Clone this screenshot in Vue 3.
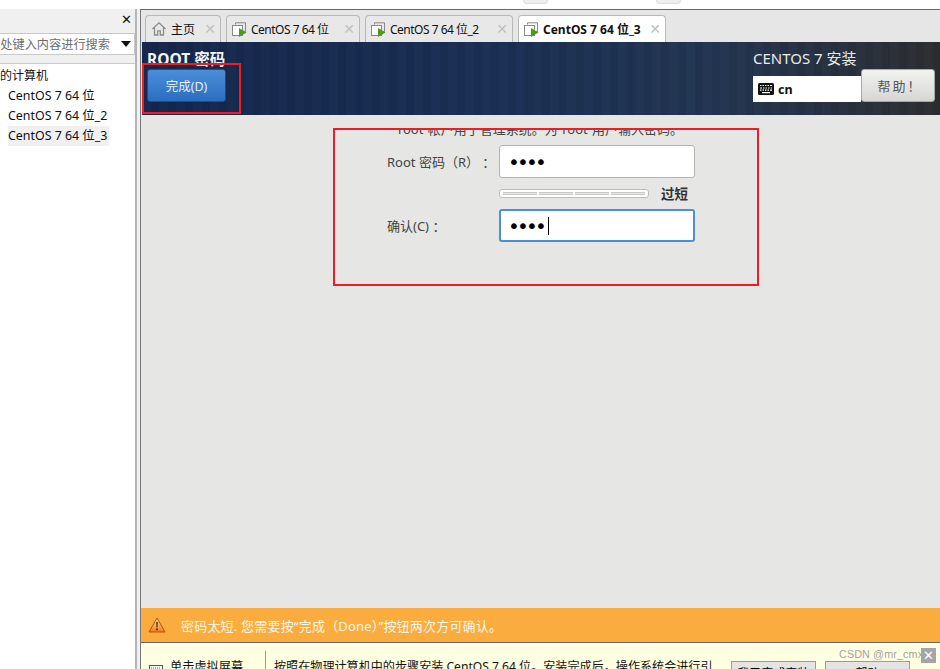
<template>
  <div class="page">
    <div class="top-strip">
      <span class="bump first"></span>
      <span class="bump second"></span>
    </div>

    <div class="workspace">
      <aside class="library">
        <div class="library-head"><span class="library-close">✕</span></div>
        <div class="search">
          <span class="search-text">在此处键入内容进行搜索</span>
          <span class="search-arrow"></span>
        </div>
        <div class="tree">
          <div class="tree-root">我的计算机</div>
          <div
            v-for="vm in vms"
            :key="vm.name"
            class="tree-row"
          >
            <svg class="tree-icon" width="8" height="14" viewBox="0 0 8 14">
              <rect x="-6" y="1" width="8" height="8" fill="none" stroke="#777" />
              <path d="M0 5l3 3.5-3 3.5z" fill="#4f9a1a" />
            </svg>
            <span class="tree-name" :class="{ selected: vm.selected }">{{ vm.name }}</span>
          </div>
        </div>
      </aside>

      <section class="vm-panel">
        <div class="tabs">
          <div class="tab home">
            <svg width="16" height="16" viewBox="0 0 16 16">
              <path d="M1.5 8L8 1.8 14.5 8M3.5 6.8V14h3.2V9.8h2.6V14h3.2V6.8" fill="none" stroke="#8b8b8b" stroke-width="1.3" />
            </svg>
            <span class="tab-label">主页</span>
            <span class="tab-close">✕</span>
          </div>
          <div
            v-for="tab in tabs"
            :key="tab.name"
            class="tab"
            :class="{ active: tab.active }"
          >
            <svg width="15" height="15" viewBox="0 0 15 15">
              <path d="M3.5 2.5V.8h10v9h-2" fill="none" stroke="#888" />
              <rect x="0.5" y="3.5" width="10" height="10" fill="#fff" stroke="#888" />
              <path d="M7 6l7.5 4.5L7 15z" fill="#4f9a1a" />
            </svg>
            <span class="tab-label">{{ tab.name }}</span>
            <span class="tab-close">✕</span>
          </div>
        </div>

        <header class="install-header">
          <div class="header-left">
            <div class="spoke-title">ROOT 密码</div>
            <button class="done-btn">完成(D)</button>
          </div>
          <div class="header-right">
            <div class="product">CENTOS 7 安装</div>
            <div class="header-controls">
              <div class="layout-entry">
                <svg width="16" height="12" viewBox="0 0 16 12">
                  <rect width="16" height="12" rx="1.5" fill="#111" />
                  <path d="M2 2.5h1.5M4.5 2.5H6M7 2.5h1.500M9.500 2.500H11M12 2.500h2M2 5h2M5 5h1.500M7.500 5H9M10 5h1.500M12.500 5H14M2 7.200h1.500M4.500 7.200H6M7 7.200h1.500M9.500 7.200H11M12 7.200h2M4 9.700h8" stroke="#fff" stroke-width="1.200" fill="none" />
                </svg>
                <span>cn</span>
              </div>
              <button class="help-btn">帮助！</button>
            </div>
          </div>
        </header>

        <main class="spoke">
          <div class="description"><span>root 帐户用于管理系统。为 root 用户输入密码。</span></div>
          <div class="form">
            <label class="field-label">Root 密码（R） ：</label>
            <div class="field"><span class="dots">••••</span></div>

            <div class="meter-row">
              <div class="meter">
                <span v-for="n in 4" :key="n" class="meter-seg"></span>
              </div>
              <span class="meter-text">过短</span>
            </div>

            <label class="field-label confirm">确认(C) ：</label>
            <div class="field focused"><span class="dots">••••</span><span class="caret"></span></div>
          </div>
        </main>

        <div class="warning">
          <svg width="18" height="16" viewBox="0 0 18 16">
            <defs>
              <linearGradient id="warn" x1="0" y1="0" x2="0" y2="1">
                <stop offset="0" stop-color="#fbe3b0" />
                <stop offset="1" stop-color="#ee7d16" />
              </linearGradient>
            </defs>
            <path d="M9 1L17 15H1z" fill="url(#warn)" stroke="#b8500c" stroke-linejoin="round" />
            <path d="M8.200 5h1.600l-.3 5.500h-1zM8.100 11.500h1.800v1.800H8.100z" fill="#5a2a08" />
          </svg>
          <span>密码太短. 您需要按“完成（Done）”按钮两次方可确认。</span>
        </div>

        <div class="hint">
          <div class="hint-left">
            <svg class="hint-icon" width="14" height="11" viewBox="0 0 14 11">
              <rect x="0.500" y="0.500" width="13" height="10" fill="#fff" stroke="#555" />
              <path d="M2 3h10M2 5.500h10" stroke="#555" stroke-dasharray="1 1" />
            </svg>
            <span>单击虚拟屏幕</span>
          </div>
          <div class="hint-text">按照在物理计算机中的步骤安装 CentOS 7 64 位。安装完成后，操作系统会进行引</div>
          <button class="hint-btn finish">我已完成安装</button>
          <button class="hint-btn">帮助</button>
        </div>
      </section>
    </div>

    <div class="mark mark-done"></div>
    <div class="mark mark-form"></div>
    <div class="watermark">CSDN @mr_cmx</div>
    <div class="ad-close">✕</div>
  </div>
</template>

<script setup>
const vms = [
  { name: 'CentOS 7 64 位' },
  { name: 'CentOS 7 64 位_2' },
  { name: 'CentOS 7 64 位_3', selected: true }
]

const tabs = [
  { name: 'CentOS 7 64 位' },
  { name: 'CentOS 7 64 位_2' },
  { name: 'CentOS 7 64 位_3', active: true }
]
</script>

<style>
html,
body {
  margin: 0;
  background: #fff;
}
</style>

<style scoped>
.page {
  position: relative;
  width: 940px;
  height: 669px;
  overflow: hidden;
  display: flex;
  flex-direction: column;
  background: #fff;
  font-family: "Noto Sans", "Noto Sans CJK SC", sans-serif;
  font-size: 12px;
  color: #111;
}

.top-strip {
  position: relative;
  height: 9px;
  flex-shrink: 0;
}

.bump {
  position: absolute;
  top: 0;
  width: 25px;
  height: 4px;
  background: #eee;
  border: 1px solid #ddd;
  border-top: none;
  border-radius: 0 0 4px 4px;
  box-sizing: border-box;
}

.bump.first { left: 523px; }
.bump.second { left: 656px; }

.workspace {
  flex: 1;
  min-height: 0;
  display: flex;
}

.library {
  width: 135px;
  flex-shrink: 0;
  display: flex;
  flex-direction: column;
  background: #f0f0f0;
  overflow: hidden;
}

.library-head {
  height: 24px;
  flex-shrink: 0;
  display: flex;
  justify-content: flex-end;
  padding: 3px 3px 0 0;
  box-sizing: border-box;
}

.library-close {
  font-family: "DejaVu Sans", sans-serif;
  font-size: 13px;
  font-weight: 700;
  line-height: 16px;
  color: #111;
}

.search {
  height: 22px;
  flex-shrink: 0;
  display: flex;
  align-items: center;
  justify-content: flex-end;
  background: #fff;
  border: 1px solid #c8c8c8;
  border-left: none;
  box-sizing: border-box;
  overflow: hidden;
}

.search-text {
  white-space: nowrap;
  color: #6d6d6d;
  font-size: 12.200px;
  margin-right: 24px;
  flex-shrink: 0;
}

.search-arrow {
  width: 0;
  height: 0;
  margin-right: 3px;
  border-left: 5px solid transparent;
  border-right: 5px solid transparent;
  border-top: 6px solid #111;
  position: absolute;
}

.tree {
  flex: 1;
  margin-top: 8px;
  padding-top: 2px;
  background: #fff;
  border-top: 1px solid #c8c8c8;
}

.tree-root {
  height: 20px;
  line-height: 20px;
  margin-left: -12px;
  white-space: nowrap;
  font-size: 12px;
}

.tree-row {
  height: 20px;
  display: flex;
  align-items: center;
}

.tree-icon {
  flex-shrink: 0;
  margin-right: 3px;
  margin-left: -3px;
}

.tree-name {
  padding: 0 2px 0 0;
  line-height: 20px;
  font-size: 12.400px;
  white-space: nowrap;
}

.tree-name.selected {
  background: #f0f0f0;
}

.vm-panel {
  flex: 1;
  min-width: 0;
  margin-left: 5px;
  display: flex;
  flex-direction: column;
  background: #e6e6e6;
  border-top: 1px solid #666;
  border-left: 1px solid #777;
  box-shadow: -3px 0 0 #f0f0f0, -5px 0 0 #b4b4b4;
}

.tabs {
  height: 32px;
  flex-shrink: 0;
  display: flex;
  align-items: flex-end;
  gap: 5px;
  padding-left: 4px;
}

.tab {
  width: 148px;
  height: 27px;
  box-sizing: border-box;
  display: flex;
  align-items: center;
  gap: 4px;
  padding: 0 4px 0 5px;
  background: #e8e8e8;
  border: 1px solid #b9b9b9;
  border-bottom: none;
  border-radius: 4px 4px 0 0;
}

.tab:nth-child(2) {
  width: 134px;
}

.tab.home {
  width: 76px;
}

.tab.active {
  background: #fff;
  font-weight: 700;
}

.tab-label {
  flex: 1;
  white-space: nowrap;
  font-size: 12px;
  letter-spacing: -0.5px;
}

.tab.active .tab-label {
  letter-spacing: 0;
}

.tab.home .tab-label {
  letter-spacing: 0;
}

.tab-close {
  font-family: "DejaVu Sans", sans-serif;
  font-size: 14px;
  font-weight: 700;
  color: #c0c0c0;
}

.install-header {
  height: 73px;
  flex-shrink: 0;
  margin-left: 1px;
  display: flex;
  justify-content: space-between;
  background:
    repeating-linear-gradient(90deg, rgba(255, 255, 255, 0.012) 0 9px, rgba(0, 0, 0, 0.03) 9px 17px),
    linear-gradient(90deg, #15264a 0%, #1a2f54 45%, #223550 72%, #2c2d30 100%);
}

.header-left {
  padding-left: 5px;
}

.spoke-title {
  height: 27px;
  padding-top: 7px;
  box-sizing: border-box;
  line-height: 21px;
  font-size: 15.500px;
  font-weight: 700;
  color: #f4f4f4;
  white-space: nowrap;
}

.done-btn {
  display: block;
  width: 79px;
  height: 33px;
  padding: 0;
  font: inherit;
  font-size: 12.500px;
  color: #e6eefa;
  background: linear-gradient(180deg, #4a8eda, #2b6ebf);
  border: 1px solid #1d4f8e;
  border-radius: 3px;
}

.header-right {
  width: 187px;
  flex-shrink: 0;
}

.product {
  height: 27px;
  padding-top: 6px;
  box-sizing: border-box;
  line-height: 21px;
  font-size: 15px;
  color: #e9e9e9;
  white-space: nowrap;
}

.header-controls {
  display: flex;
  align-items: flex-end;
}

.layout-entry {
  width: 108px;
  height: 26px;
  margin-bottom: 7px;
  padding-left: 5px;
  box-sizing: border-box;
  display: flex;
  align-items: center;
  gap: 4px;
  background: #fff;
  font-size: 12.500px;
  font-weight: 700;
}

.help-btn {
  width: 74px;
  height: 33px;
  padding: 0 0 0 4px;
  margin-bottom: 7px;
  font: inherit;
  font-size: 13px;
  letter-spacing: 2px;
  color: #555;
  background: linear-gradient(180deg, #f2f2f0, #d6d6d3);
  border: 1px solid #a8a8a6;
  border-radius: 3px;
}

.spoke {
  flex: 1;
  min-height: 0;
  padding-top: 13px;
  background: #e6e6e4;
}

.description {
  height: 9px;
  overflow: hidden;
  display: flex;
  justify-content: center;
  align-items: flex-end;
  color: #444;
  font-size: 13px;
  word-spacing: 1px;
  line-height: 16px;
}

.description span {
  flex-shrink: 0;
  white-space: nowrap;
}

.form {
  margin: 8px 0 0 246px;
  display: grid;
  grid-template-columns: 112px 196px;
  grid-template-rows: 33px 9px 33px;
  row-gap: 11px;
  align-items: center;
}

.field-label {
  font-size: 13px;
  color: #444;
  white-space: nowrap;
}

.field {
  height: 33px;
  box-sizing: border-box;
  display: flex;
  align-items: center;
  padding-left: 9px;
  background: #fff;
  border: 1px solid #b4b4b2;
  border-radius: 3px;
}

.field.focused {
  border: 2px solid #4a90d9;
  padding-left: 8px;
}

.dots {
  font-family: "DejaVu Sans", sans-serif;
  font-size: 20px;
  letter-spacing: -2.800px;
  line-height: 20px;
  color: #000;
  margin-left: -1px;
}

.caret {
  width: 1px;
  height: 18px;
  margin-left: 4px;
  background: #000;
}

.meter-row {
  grid-column: 2;
  display: flex;
  align-items: center;
  gap: 12px;
}

.meter {
  width: 150px;
  height: 9px;
  flex-shrink: 0;
  box-sizing: border-box;
  display: flex;
  gap: 2px;
  padding: 2px 3px;
  background: #fff;
  border: 1px solid #bdbdbb;
  border-radius: 3px;
}

.meter-seg {
  flex: 1;
  background: #e6e6e4;
  border-top: 1px solid #c9c9c7;
  border-bottom: 1px solid #c9c9c7;
  height: 1px;
}

.meter-text {
  font-size: 13.500px;
  font-weight: 700;
  color: #333;
  white-space: nowrap;
  margin-top: -2px;
}

.warning {
  height: 35px;
  box-sizing: border-box;
  flex-shrink: 0;
  display: flex;
  align-items: center;
  gap: 15px;
  padding-left: 7px;
  background: #fbac3f;
  border-bottom: 1px solid #666;
  color: #fff6e6;
  font-size: 13px;
  letter-spacing: 0.2px;
}

.warning span {
  white-space: nowrap;
}

.hint {
  height: 26px;
  flex-shrink: 0;
  display: flex;
  padding: 8px 0 0 8px;
  box-sizing: border-box;
  background: #ffffe1;
  overflow: hidden;
  align-items: flex-start;
}

.hint-left {
  width: 117px;
  flex-shrink: 0;
  display: flex;
  gap: 7px;
  height: 30px;
  border-right: 1px solid #999;
  padding-top: 7px;
  box-sizing: border-box;
  line-height: 18px;
  font-size: 12.200px;
  white-space: nowrap;
}

.hint-icon {
  margin-top: 7px;
  flex-shrink: 0;
}

.hint-text {
  width: 450px;
  flex-shrink: 0;
  margin-left: 8px;
  line-height: 20px;
  padding-top: 6px;
  font-size: 12.100px;
  white-space: nowrap;
}

.hint-btn {
  width: 85px;
  height: 24px;
  flex-shrink: 0;
  margin: 10px 0 0 9px;
  padding: 0;
  font: inherit;
  background: #e4e4e4;
  border: 1px solid #9c9c9c;
}

.hint-btn.finish {
  margin-left: 7px;
}

.mark {
  position: absolute;
  box-sizing: border-box;
  border: 2px solid #ee1c25;
}

.mark-done {
  left: 142px;
  top: 63px;
  width: 99px;
  height: 51px;
}

.mark-form {
  left: 333px;
  top: 128px;
  width: 426px;
  height: 158px;
}

.watermark {
  position: absolute;
  left: 839px;
  top: 648px;
  font-family: "Liberation Sans", sans-serif;
  font-size: 10.800px;
  letter-spacing: 0.1px;
  color: #a3a3a3;
  white-space: nowrap;
}

.ad-close {
  position: absolute;
  left: 921px;
  top: 648px;
  width: 15px;
  height: 15px;
  background: #a5a5a5;
  color: #fff;
  font-family: "DejaVu Sans", sans-serif;
  font-size: 13px;
  font-weight: 700;
  line-height: 15px;
  text-align: center;
}
</style>
